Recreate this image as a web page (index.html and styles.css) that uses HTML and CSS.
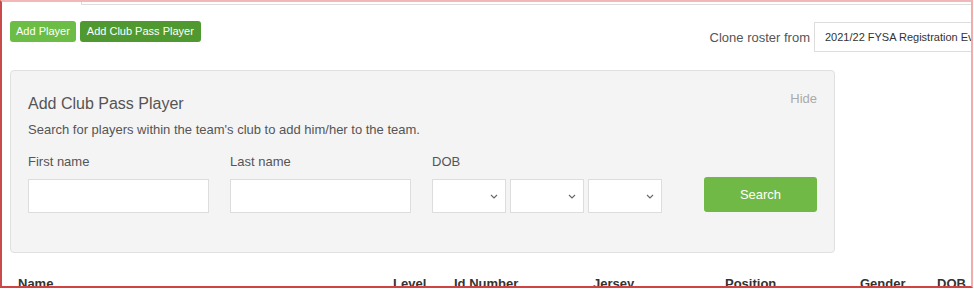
FILE: index.html
```html
<!DOCTYPE html>
<html lang="en">
<head>
    <meta charset="UTF-8">
    <meta name="viewport" content="width=device-width, initial-scale=1.0">
    <title>Team Roster</title>
    <link rel="stylesheet" href="styles.css">
</head>
<body>
    <div class="frame">
        <div class="tabs">
            <div class="tab-active"></div>
            <div class="tab-rest"></div>
        </div>

        <div class="toolbar">
            <button class="btn btn-light">Add Player</button>
            <button class="btn btn-dark">Add Club Pass Player</button>
            <div class="clone">
                <label for="cloneFrom">Clone roster from</label>
                <select id="cloneFrom" class="clone-select">
                    <option>2021/22 FYSA Registration Event</option>
                </select>
            </div>
        </div>

        <div class="panel">
            <div class="panel-head">
                <h3>Add Club Pass Player</h3>
                <a class="hide-link">Hide</a>
            </div>
            <p class="panel-desc">Search for players within the team's club to add him/her to the team.</p>
            <div class="search-row">
                <div class="field field-name">
                    <label for="firstName">First name</label>
                    <input type="text" id="firstName">
                </div>
                <div class="field field-name">
                    <label for="lastName">Last name</label>
                    <input type="text" id="lastName">
                </div>
                <div class="field">
                    <label>DOB</label>
                    <div class="dob">
                        <div class="dob-box">
                            <select></select>
                            <svg class="chev" width="8" height="5" viewBox="0 0 8 5"><path d="M1 1l3 3 3-3" fill="none" stroke="#666" stroke-width="1.1"/></svg>
                        </div>
                        <div class="dob-box">
                            <select></select>
                            <svg class="chev" width="8" height="5" viewBox="0 0 8 5"><path d="M1 1l3 3 3-3" fill="none" stroke="#666" stroke-width="1.1"/></svg>
                        </div>
                        <div class="dob-box">
                            <select></select>
                            <svg class="chev" width="8" height="5" viewBox="0 0 8 5"><path d="M1 1l3 3 3-3" fill="none" stroke="#666" stroke-width="1.1"/></svg>
                        </div>
                    </div>
                </div>
                <button class="btn-search">Search</button>
            </div>
        </div>

        <table class="roster">
            <colgroup>
                <col style="width: 375px">
                <col style="width: 61px">
                <col style="width: 139px">
                <col style="width: 132px">
                <col style="width: 135px">
                <col style="width: 77px">
                <col style="width: 60px">
            </colgroup>
            <thead>
                <tr>
                    <th>Name</th>
                    <th>Level</th>
                    <th>Id Number</th>
                    <th>Jersey</th>
                    <th>Position</th>
                    <th>Gender</th>
                    <th>DOB</th>
                </tr>
            </thead>
        </table>
    </div>
</body>
</html>
```

FILE: styles.css
```css
body {
    margin: 0;
    font-family: "Liberation Sans", Arial, sans-serif;
    color: #555;
    background: #fff;
}
.frame {
    width: 973px;
    height: 288px;
    box-sizing: border-box;
    border-left: 2px solid #c94a4a;
    border-top: 2px solid #f3b7b7;
    border-right: 2px solid #f4abab;
    border-bottom: 2px solid #d04343;
    overflow: hidden;
}
.tabs {
    display: flex;
    height: 3px;
}
.tab-active {
    width: 79px;
}
.tab-rest {
    flex: 1;
    border-left: 1px solid #ddd;
    border-bottom: 1px solid #ddd;
}
.toolbar {
    display: flex;
    align-items: flex-start;
    gap: 4px;
    margin: 16px -30px 0 8px;
}
.btn {
    font-family: inherit;
    font-size: 11px;
    line-height: 15px;
    color: #fff;
    border: none;
    border-radius: 3px;
    padding: 3px 6px;
    cursor: pointer;
}
.btn-light {
    background-color: #6cbd45;
}
.btn-dark {
    background-color: #4f9930;
    padding: 3px 7px;
}
.clone {
    margin-left: auto;
    display: flex;
    align-items: center;
    gap: 4px;
    margin-top: 1px;
}
.clone label {
    font-size: 13px;
    color: #555;
}
.clone-select {
    width: 187px;
    height: 30px;
    border: 1px solid #ddd;
    border-radius: 0;
    background: #fff;
    font-family: inherit;
    font-size: 11px;
    color: #333;
    padding: 0 10px;
    appearance: none;
}
.panel {
    margin: 18px 0 0 8px;
    width: 825px;
    box-sizing: border-box;
    background-color: #f4f4f4;
    border: 1px solid #e0e0e0;
    border-radius: 4px;
    padding: 23px 17px 39px;
}
.panel-head {
    display: flex;
    justify-content: space-between;
    align-items: flex-start;
}
.panel-head h3 {
    margin: 0;
    font-size: 16px;
    font-weight: normal;
    line-height: 20px;
    color: #555;
}
.hide-link {
    font-size: 13px;
    color: #aaa;
    line-height: 20px;
    margin-top: -5px;
    cursor: pointer;
}
.panel-desc {
    margin: 7px 0 0;
    font-size: 13px;
    line-height: 18px;
}
.search-row {
    display: flex;
    align-items: flex-end;
    gap: 21px;
    margin-top: 14px;
}
.field label {
    display: block;
    font-size: 13px;
    line-height: 18px;
    margin-bottom: 8px;
}
.field-name input {
    width: 181px;
    height: 34px;
    box-sizing: border-box;
    border: 1px solid #ddd;
    background: #fff;
    padding: 6px 8px;
    font-family: inherit;
}
.dob {
    display: flex;
    gap: 4px;
}
.dob-box {
    position: relative;
}
.dob-box select {
    width: 74px;
    height: 34px;
    box-sizing: border-box;
    border: 1px solid #ddd;
    border-radius: 0;
    background: #fff;
    appearance: none;
    display: block;
}
.chev {
    position: absolute;
    right: 8px;
    top: 15px;
}
.btn-search {
    margin-left: auto;
    width: 113px;
    height: 35px;
    margin-bottom: 1px;
    background-color: #71b946;
    color: #fff;
    border: none;
    border-radius: 3px;
    font-family: inherit;
    font-size: 13px;
    cursor: pointer;
}
.roster {
    width: 979px;
    margin: 13px 0 0 8px;
    border-collapse: collapse;
    table-layout: fixed;
}
.roster th {
    text-align: left;
    font-size: 13px;
    font-weight: bold;
    color: #333;
    line-height: 20px;
    padding: 8px;
    white-space: nowrap;
}
```
